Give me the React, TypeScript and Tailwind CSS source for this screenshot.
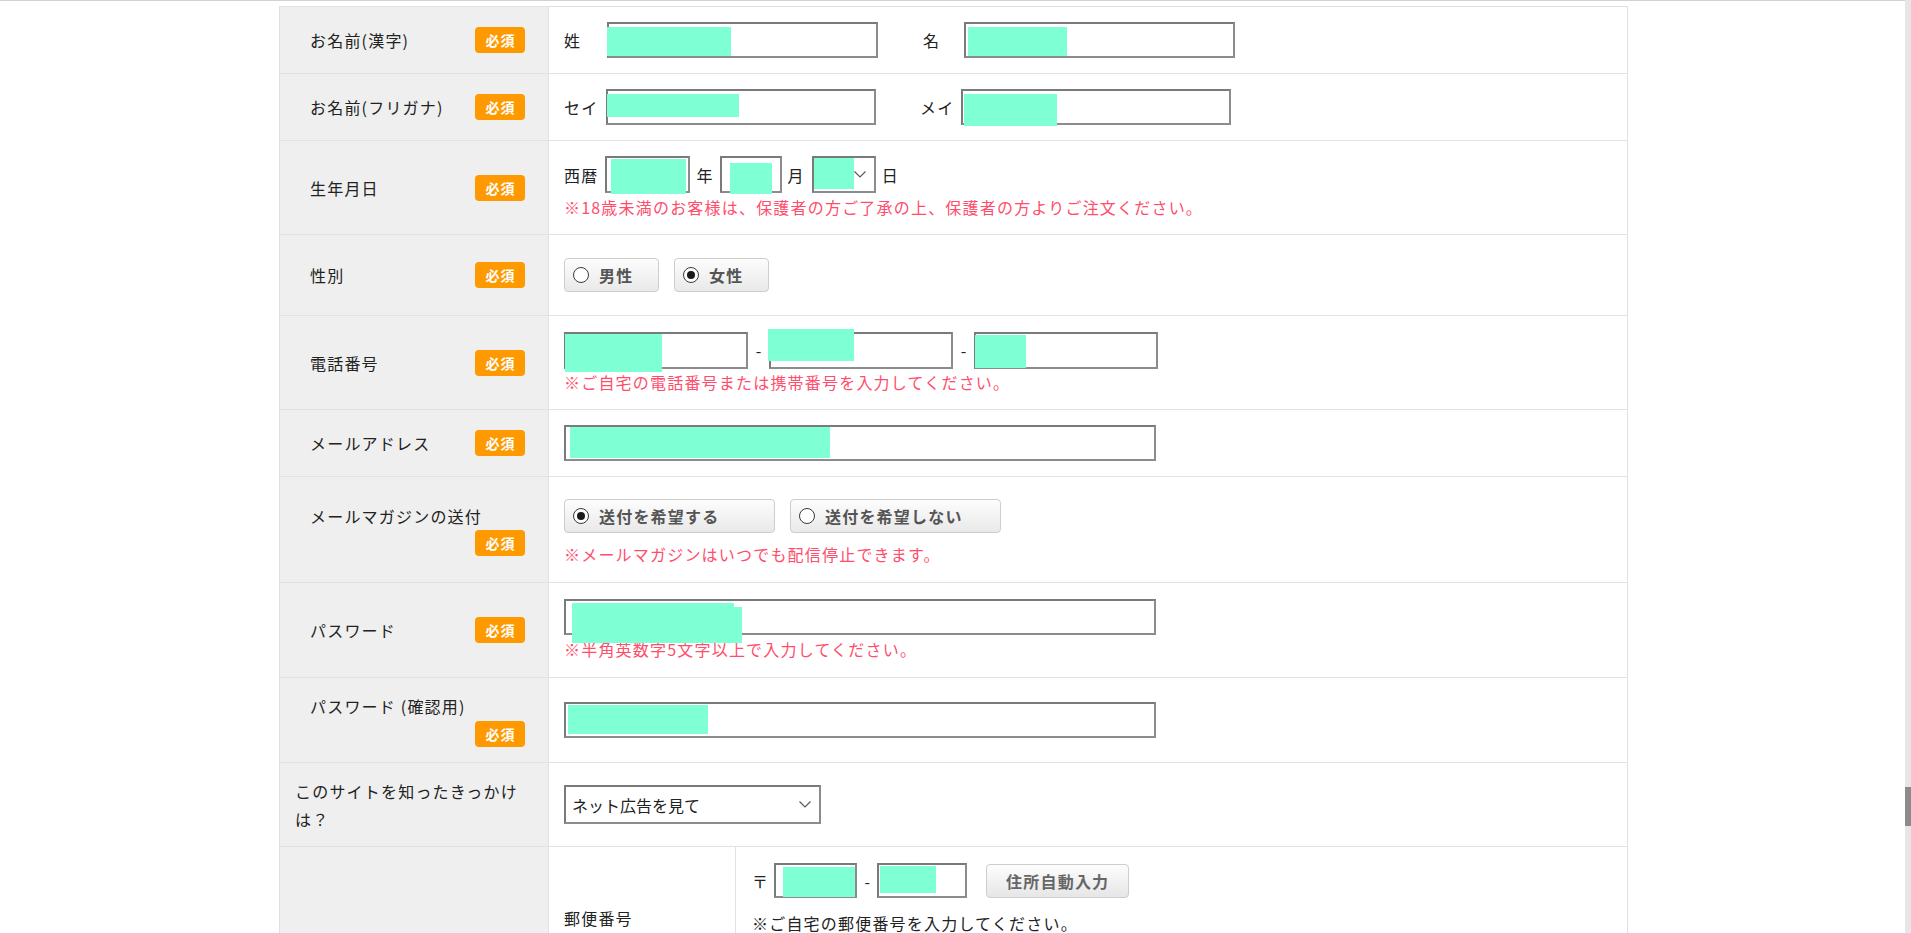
import type { ReactNode } from "react";

const FONT = "font-['Noto_Sans_CJK_JP','Noto_Sans',sans-serif]";

function Badge() {
  return (
    <span className="inline-flex h-[26px] w-[50px] shrink-0 items-center justify-center rounded-[4px] bg-[#ff9900] pl-[1px] text-[14px] font-bold leading-none tracking-[1px] text-white">
      必須
    </span>
  );
}

function Chevron() {
  return (
    <svg width="12" height="7" viewBox="0 0 12 7" className="shrink-0">
      <polyline points="0.5,0.5 6,6 11.5,0.5" fill="none" stroke="#555" strokeWidth="1.1" />
    </svg>
  );
}

// input / select box, fills = green masks laid over the entered values
function Field({
  className,
  fills = [],
  chevron,
  children,
}: {
  className: string;
  fills?: string[];
  chevron?: boolean;
  children?: ReactNode;
}) {
  return (
    <div className={`relative shrink-0 ${className}`}>
      <div className="flex h-full w-full items-center justify-between border-2 border-[#7a7a7a] border-b-[#8c8c8c] border-r-[#8c8c8c] bg-white pl-[6px] pr-[8px]">
        <span className="whitespace-nowrap">{children}</span>
        {chevron && <Chevron />}
      </div>
      {fills.map((f) => (
        <div key={f} className={`absolute bg-[#7fffd4] ${f}`} />
      ))}
    </div>
  );
}

function RadioBtn({ label, checked, className }: { label: string; checked?: boolean; className: string }) {
  return (
    <div
      className={`flex h-[34px] shrink-0 items-center rounded-[4px] border border-[#cdcdcd] bg-linear-to-b from-[#fdfdfd] to-[#e9e9e9] pl-[8px] ${className}`}
    >
      <span className="flex h-[16px] w-[16px] items-center justify-center rounded-full border border-[#3a3a3a] bg-white">
        {checked && <span className="h-[8px] w-[8px] rounded-full bg-[#1a1a1a]" />}
      </span>
      <span className="ml-[10px] text-[16px] font-bold text-[#555]">{label}</span>
    </div>
  );
}

function Note({ children, className = "" }: { children: ReactNode; className?: string }) {
  return <p className={`text-[#ff4d6b] ${className}`}>{children}</p>;
}

function Label({ text, wrap, gap = "mt-[2px]" }: { text: string; wrap?: boolean; gap?: string }) {
  if (wrap) {
    return (
      <div className="flex w-full flex-col pl-[30px] pr-[23px]">
        <span>{text}</span>
        <span className={`self-end ${gap}`}>
          <Badge />
        </span>
      </div>
    );
  }
  return (
    <div className="flex w-full items-center justify-between pl-[30px] pr-[23px]">
      <span>{text}</span>
      <Badge />
    </div>
  );
}

function Row({ h, label, children }: { h: string; label: ReactNode; children: ReactNode }) {
  return (
    <div className={`flex border-b border-[#e2e2e2] ${h}`}>
      <div className="flex w-[269px] shrink-0 items-center border-r border-[#e2e2e2] bg-[#eeefee]">{label}</div>
      <div className="flex min-w-0 flex-1 flex-col justify-center pl-[15px]">{children}</div>
    </div>
  );
}

export default function App() {
  return (
    <div className={`flex h-[933px] w-full overflow-hidden bg-white text-[16px] leading-[24px] tracking-[1.2px] text-[#222] ${FONT}`}>
      <div className="min-w-0 flex-1 border-t border-[#d2d2d2]">
        <div className="ml-[279px] mt-[5px] w-[1349px] border border-[#e0e0e0]">
          <Row h="h-[67px]" label={<Label text="お名前(漢字)" />}>
            <div className="flex items-center">
              <span className="w-[43px]">姓</span>
              <Field className="h-[36px] w-[271px]" fills={["left-[0px] top-[5px] w-[124px] h-[29px]"]} />
              <span className="ml-[45px] w-[41px]">名</span>
              <Field className="h-[36px] w-[271px]" fills={["left-[4px] top-[5px] w-[99px] h-[29px]"]} />
            </div>
          </Row>

          <Row h="h-[67px]" label={<Label text="お名前(フリガナ)" />}>
            <div className="flex items-center">
              <span className="w-[42px]">セイ</span>
              <Field className="h-[36px] w-[270px]" fills={["left-[1px] top-[5px] w-[132px] h-[23px]"]} />
              <span className="ml-[44px] w-[41px]">メイ</span>
              <Field className="h-[36px] w-[270px]" fills={["left-[3px] top-[5px] w-[93px] h-[32px]"]} />
            </div>
          </Row>

          <Row h="h-[94px]" label={<Label text="生年月日" />}>
            <div className="flex items-center">
              <span>西暦</span>
              <Field className="ml-[7px] h-[37px] w-[85px]" fills={["left-[6px] top-[3px] w-[75px] h-[35px]"]} />
              <span className="ml-[6px]">年</span>
              <Field className="ml-[6px] h-[37px] w-[62px]" chevron fills={["left-[10px] top-[7px] w-[42px] h-[31px]"]} />
              <span className="ml-[6px]">月</span>
              <Field className="ml-[7px] h-[37px] w-[64px]" chevron fills={["left-[2px] top-[2px] w-[40px] h-[31px]"]} />
              <span className="ml-[6px]">日</span>
            </div>
            <Note className="mt-[2px]">※18歳未満のお客様は、保護者の方ご了承の上、保護者の方よりご注文ください。</Note>
          </Row>

          <Row h="h-[81px]" label={<Label text="性別" />}>
            <div className="flex items-center gap-[15px]">
              <RadioBtn label="男性" className="w-[95px]" />
              <RadioBtn label="女性" checked className="w-[95px]" />
            </div>
          </Row>

          <Row h="h-[94px]" label={<Label text="電話番号" />}>
            <div className="flex items-center">
              <Field className="h-[37px] w-[184px]" fills={["left-[1px] top-[2px] w-[97px] h-[38px]"]} />
              <span className="w-[21px] text-center tracking-normal">-</span>
              <Field className="h-[37px] w-[184px]" fills={["left-[-1px] top-[-3px] w-[86px] h-[32px]"]} />
              <span className="w-[21px] text-center tracking-normal">-</span>
              <Field className="h-[37px] w-[184px]" fills={["left-[1px] top-[3px] w-[51px] h-[33px]"]} />
            </div>
            <Note className="mt-[1px]">※ご自宅の電話番号または携帯番号を入力してください。</Note>
          </Row>

          <Row h="h-[67px]" label={<Label text="メールアドレス" />}>
            <Field className="h-[36px] w-[592px]" fills={["left-[6px] top-[2px] w-[260px] h-[31px]"]} />
          </Row>

          <Row h="h-[106px]" label={<Label text="メールマガジンの送付" wrap />}>
            <div className="mt-[6px] flex items-center gap-[15px]">
              <RadioBtn label="送付を希望する" checked className="w-[211px]" />
              <RadioBtn label="送付を希望しない" className="w-[211px]" />
            </div>
            <Note className="mt-[9px]">※メールマガジンはいつでも配信停止できます。</Note>
          </Row>

          <Row h="h-[95px]" label={<Label text="パスワード" />}>
            <Field
              className="h-[36px] w-[592px]"
              fills={["left-[8px] top-[4px] w-[162px] h-[6px]", "left-[8px] top-[8px] w-[170px] h-[36px]"]}
            />
            <Note className="mt-[2px]">※半角英数字5文字以上で入力してください。</Note>
          </Row>

          <Row h="h-[85px]" label={<Label text="パスワード (確認用)" wrap gap="mt-[3px]" />}>
            <Field className="h-[36px] w-[592px]" fills={["left-[4px] top-[3px] w-[140px] h-[29px]"]} />
          </Row>

          <Row
            h="h-[84px]"
            label={<p className="px-[15px] leading-[28px]">このサイトを知ったきっかけは？</p>}
          >
            <Field className="h-[39px] w-[257px] tracking-normal" chevron>
              ネット広告を見て
            </Field>
          </Row>

          <div className="flex h-[160px]">
            <div className="w-[269px] shrink-0 border-r border-[#e2e2e2] bg-[#eeefee]" />
            <div className="flex flex-1">
              <div className="flex w-[187px] shrink-0 items-center border-r border-[#e2e2e2] pb-[18px] pl-[15px]">
                郵便番号
              </div>
              <div className="pl-[16px] pt-[16px]">
                <div className="flex items-center">
                  <span>〒</span>
                  <Field className="ml-[5px] h-[35px] w-[83px]" fills={["left-[9px] top-[4px] w-[72px] h-[30px]"]} />
                  <span className="w-[20px] text-center tracking-normal">-</span>
                  <Field className="h-[35px] w-[90px]" fills={["left-[3px] top-[3px] w-[56px] h-[27px]"]} />
                  <div className="ml-[19px] flex h-[34px] w-[143px] items-center justify-center rounded-[4px] border border-[#cdcdcd] bg-linear-to-b from-[#fdfdfd] to-[#e6e6e6] text-[16px] font-bold text-[#666]">
                    住所自動入力
                  </div>
                </div>
                <p className="mt-[13px]">※ご自宅の郵便番号を入力してください。</p>
              </div>
            </div>
          </div>
        </div>
      </div>
      <div className="flex w-[6px] shrink-0 flex-col bg-[#e6e6e6] pt-[787px]">
        <div className="h-[39px] bg-[#8b8b8b]" />
      </div>
    </div>
  );
}
